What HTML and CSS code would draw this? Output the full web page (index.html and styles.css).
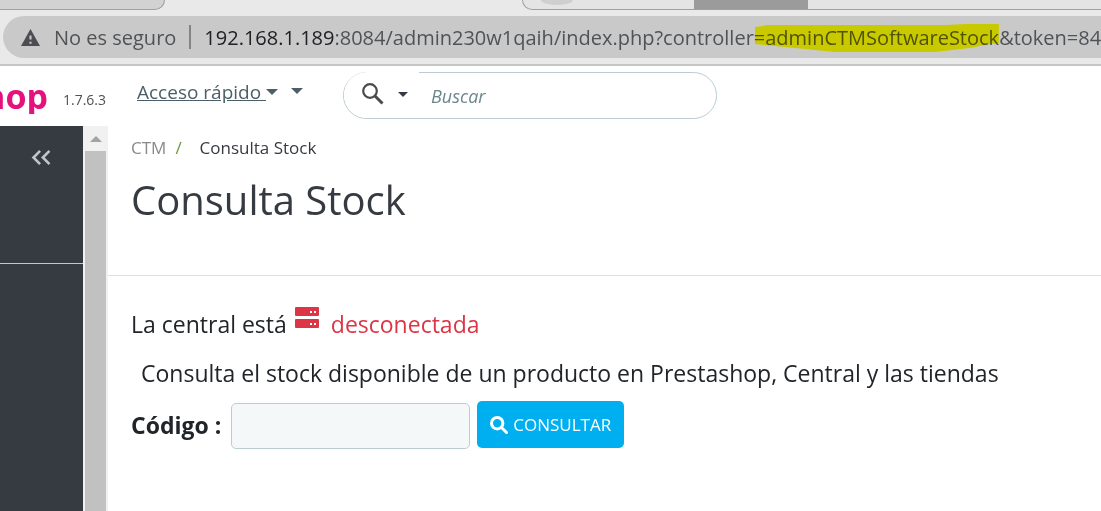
FILE: index.html
```html
<!DOCTYPE html>
<html lang="es">
<head>
  <meta charset="UTF-8" />
  <meta name="viewport" content="width=device-width, initial-scale=1.0"/>
  <title>Consulta Stock</title>
  <link rel="stylesheet" href="styles.css">
</head>
<body>
  <div class="browser">
    <div class="tab-strip">
      <div class="tab tab-left"></div>
      <div class="tab tab-right">
        <span class="tab-icon"></span>
        <span class="tab-block"></span>
      </div>
    </div>
    <div class="address-bar">
      <svg class="warning-icon" viewBox="0 0 18 16" aria-hidden="true">
        <path d="M9 0 18 16H0Z" fill="#4b4d50"/>
        <path d="M8 6h2v4H8zM8 12h2v2H8z" fill="#c9c9c9"/>
      </svg>
      <span class="insecure">No es seguro</span>
      <span class="divider"></span>
      <span class="url"><span class="host">192.168.1.189</span>:8084/admin230w1qaih/index.php?controller=<mark class="marked">adminCTMSoftwareStock<svg class="marker" viewBox="0 0 244 28" preserveAspectRatio="none" aria-hidden="true"><path d="M0 3 8 2 10 1 190 1 212 0H244V19L235 20 215 24 180 28H80L40 24 0 20Z" fill="#caca00"/></svg></mark>&amp;token=84a</span>
    </div>
  </div>

  <header class="header">
    <div class="logo"><span>hop</span></div>
    <span class="version">1.7.6.3</span>
    <a class="quick-access" href="#">Acceso rápido <span class="caret"></span></a>
    <span class="caret caret-extra"></span>
    <form class="search">
      <button class="search-type" type="button" aria-label="Tipo de búsqueda">
        <svg class="search-icon" viewBox="0 0 22 22" aria-hidden="true">
          <circle cx="8" cy="8" r="6.8" fill="none" stroke="#4a4a4a" stroke-width="2.2"/>
          <path d="M13 13 20.5 20.5" stroke="#4a4a4a" stroke-width="3"/>
        </svg>
        <span class="caret"></span>
      </button>
      <input class="search-input" type="text" placeholder="Buscar" aria-label="Buscar">
    </form>
  </header>

  <div class="layout">
    <nav class="sidebar">
      <button class="collapse" type="button" aria-label="Contraer menú">
        <svg viewBox="0 0 20 16" aria-hidden="true">
          <path d="M9 1 2 8l7 7M19 1l-7 7 7 7" fill="none" stroke="#bec6ca" stroke-width="2.8"/>
        </svg>
      </button>
    </nav>
    <div class="scrollbar">
      <span class="scroll-arrow"></span>
      <span class="scroll-thumb"></span>
    </div>
    <main class="main">
      <div class="page-head">
        <div class="breadcrumb">
          <a href="#">CTM</a>
          <span class="slash">/</span>
          <span>Consulta Stock</span>
        </div>
        <h1>Consulta Stock</h1>
      </div>
      <div class="content">
        <p class="status">
          La central está
          <svg class="server-icon" viewBox="0 0 24 22" aria-hidden="true">
            <rect width="24" height="9" rx="1" fill="#dc3545"/>
            <rect y="12" width="24" height="9" rx="1" fill="#dc3545"/>
            <path d="M15 4h2v2h-2zM19 4h2v2h-2zM15 16h2v2h-2zM19 16h2v2h-2z" fill="#fff"/>
          </svg>
          <span class="offline">desconectada</span>
        </p>
        <p class="description">Consulta el stock disponible de un producto en Prestashop, Central y las tiendas</p>
        <form class="stock-form">
          <label for="codigo">Código :</label>
          <input id="codigo" class="code-input" type="text">
          <button class="submit" type="button">
            <svg viewBox="0 0 18 18" aria-hidden="true">
              <circle cx="7.2" cy="7.2" r="5.7" fill="none" stroke="#fff" stroke-width="3"/>
              <path d="m11.5 11.5 5 5" stroke="#fff" stroke-width="3" stroke-linecap="round"/>
            </svg>
            CONSULTAR
          </button>
        </form>
      </div>
    </main>
  </div>
</body>
</html>
```
FILE: styles.css
```css
* {
  box-sizing: border-box;
}

body {
  font-family: "Open Sans", "Noto Sans", sans-serif;
  background-color: #fff;
  color: #212529;
  margin: 0;
  min-height: 100vh;
  display: flex;
  flex-direction: column;
  overflow: hidden;
}

/* Browser bar */
.browser {
  background-color: #e9e9e9;
  border-bottom: 2px solid #c6c6c6;
  padding-bottom: 6px;
}

.tab-strip {
  display: flex;
  justify-content: space-between;
  height: 10px;
  margin-bottom: 6px;
}

.tab {
  border: 1px solid #a0a0a0;
  border-top: none;
}

.tab-left {
  width: 15%;
  background-color: #d2d2d2;
  border-left: none;
  border-bottom-right-radius: 10px;
}

.tab-right {
  display: flex;
  width: 579px;
  background-color: #e4e4e4;
  border-right: none;
  border-bottom-left-radius: 10px;
}

.tab-icon {
  width: 32px;
  height: 5px;
  margin-left: 18px;
  background-color: #cfcfcf;
  border-radius: 0 0 50% 50% / 0 0 100% 100%;
}

.tab-block {
  width: 114px;
  margin-left: 121px;
  background-color: #9b9b9b;
}

.address-bar {
  display: flex;
  align-items: center;
  height: 42px;
  margin-left: 3px;
  padding-left: 18px;
  background-color: #c9c9c9;
  border-radius: 21px 0 0 21px;
  font-size: 20px;
  color: #505356;
  white-space: nowrap;
  overflow: hidden;
}

.warning-icon {
  width: 19px;
  height: 17px;
  margin-right: 14px;
  flex: none;
}

.divider {
  width: 2px;
  height: 24px;
  margin: 0 13px;
  background-color: #848484;
  flex: none;
}

.host {
  color: #202124;
}

.marked {
  position: relative;
  background: none;
  color: inherit;
}

.marker {
  position: absolute;
  top: 0;
  left: -10px;
  width: calc(100% + 10px);
  height: 28px;
  mix-blend-mode: darken;
  z-index: 1;
}

/* Shop header */
.header {
  display: flex;
  align-items: flex-start;
  height: 60px;
  color: #4c5f66;
}

.logo {
  display: flex;
  justify-content: flex-end;
  width: 48px;
  height: 48px;
  overflow: hidden;
  color: #e5127d;
  font-size: 34px;
  font-weight: 700;
  line-height: 60px;
}

.version {
  width: 89px;
  padding: 24px 0 0 15px;
  color: #4e5254;
  font-size: 14px;
  line-height: 20px;
}

.quick-access {
  display: flex;
  align-items: center;
  padding-top: 14px;
  color: #4c5f66;
  font-size: 19px;
  line-height: 24px;
  white-space: pre;
}

.caret {
  display: inline-block;
  border: 6px solid transparent;
  border-top-color: currentColor;
  border-bottom: none;
}

.caret-extra {
  margin: 22px 0 0 13px;
}

.search {
  display: flex;
  width: 374px;
  height: 47px;
  margin: 6px 0 0 40px;
  border: 1px solid #bbcdd2;
  border-radius: 24px;
}

/* covers the pill's top border above the icon */
.search-type {
  display: flex;
  align-items: center;
  gap: 14px;
  width: 75px;
  margin-top: -1px;
  padding: 0 0 2px 18px;
  background-color: #fff;
  border: none;
  border-radius: 24px 0 0 24px;
  color: #363a41;
}

.search-icon {
  width: 22px;
  height: 22px;
}

.search-type .caret {
  border-width: 5px;
  border-bottom: none;
}

.search-input {
  flex: 1;
  min-width: 0;
  padding: 0 12px;
  background: none;
  border: none;
  font-family: inherit;
  font-size: 18px;
}

.search-input::placeholder {
  color: #6c868e;
  font-style: italic;
}

/* Page layout */
.layout {
  display: flex;
  flex: 1;
}

.sidebar {
  width: 83px;
  background-color: #363a41;
}

.collapse {
  display: flex;
  justify-content: flex-end;
  width: 100%;
  height: 138px;
  padding: 24px 32px 0 0;
  background: none;
  border: none;
  border-bottom: 1px solid #bbcdd2;
}

.collapse svg {
  width: 20px;
  height: 15px;
}

.scrollbar {
  display: flex;
  flex-direction: column;
  align-items: center;
  width: 25px;
  background-color: #f1f1f1;
}

.scroll-arrow {
  margin: 10px 0 9px;
  border: 6px solid transparent;
  border-top: none;
  border-bottom-color: #a3a3a3;
}

.scroll-thumb {
  flex: 1;
  width: 21px;
  background-color: #c1c1c1;
}

.main {
  flex: 1;
  min-width: 0;
}

.page-head {
  height: 150px;
  padding: 10px 23px 0;
  border-bottom: 1px solid #dfdfdf;
}

.breadcrumb {
  display: flex;
  font-size: 17px;
  line-height: 24px;
  color: #363a41;
}

.breadcrumb a {
  color: #8a8a8a;
  text-decoration: none;
}

.slash {
  margin: 0 18px 0 9px;
  color: #6c9a3b;
}

h1 {
  margin: 13px 0 0;
  color: #363a41;
  font-size: 40px;
  font-weight: 400;
  line-height: 54px;
}

.content {
  padding: 31px 23px 0;
  font-size: 23px;
}

.status {
  display: flex;
  margin: 0;
  line-height: 34px;
}

.server-icon {
  width: 24px;
  height: 22px;
  margin: 0 12px 0 8px;
}

.offline {
  color: #dc3545;
}

.description {
  margin: 15px 0 10px 10px;
  line-height: 34px;
}

.stock-form {
  display: flex;
  align-items: center;
}

.stock-form label {
  font-weight: 700;
}

.code-input {
  width: 239px;
  height: 46px;
  margin: 3px 7px 0 10px;
  padding: 0 12px;
  background-color: #f4f8f9;
  border: 1px solid #bbcdd2;
  border-radius: 5px;
  font: inherit;
}

.submit {
  display: flex;
  align-items: center;
  gap: 5px;
  height: 47px;
  padding: 0 13px;
  background-color: #00aff0;
  border: none;
  border-radius: 5px;
  color: #fff;
  font-family: inherit;
  font-size: 17px;
}

.submit svg {
  width: 18px;
  height: 18px;
}
```
